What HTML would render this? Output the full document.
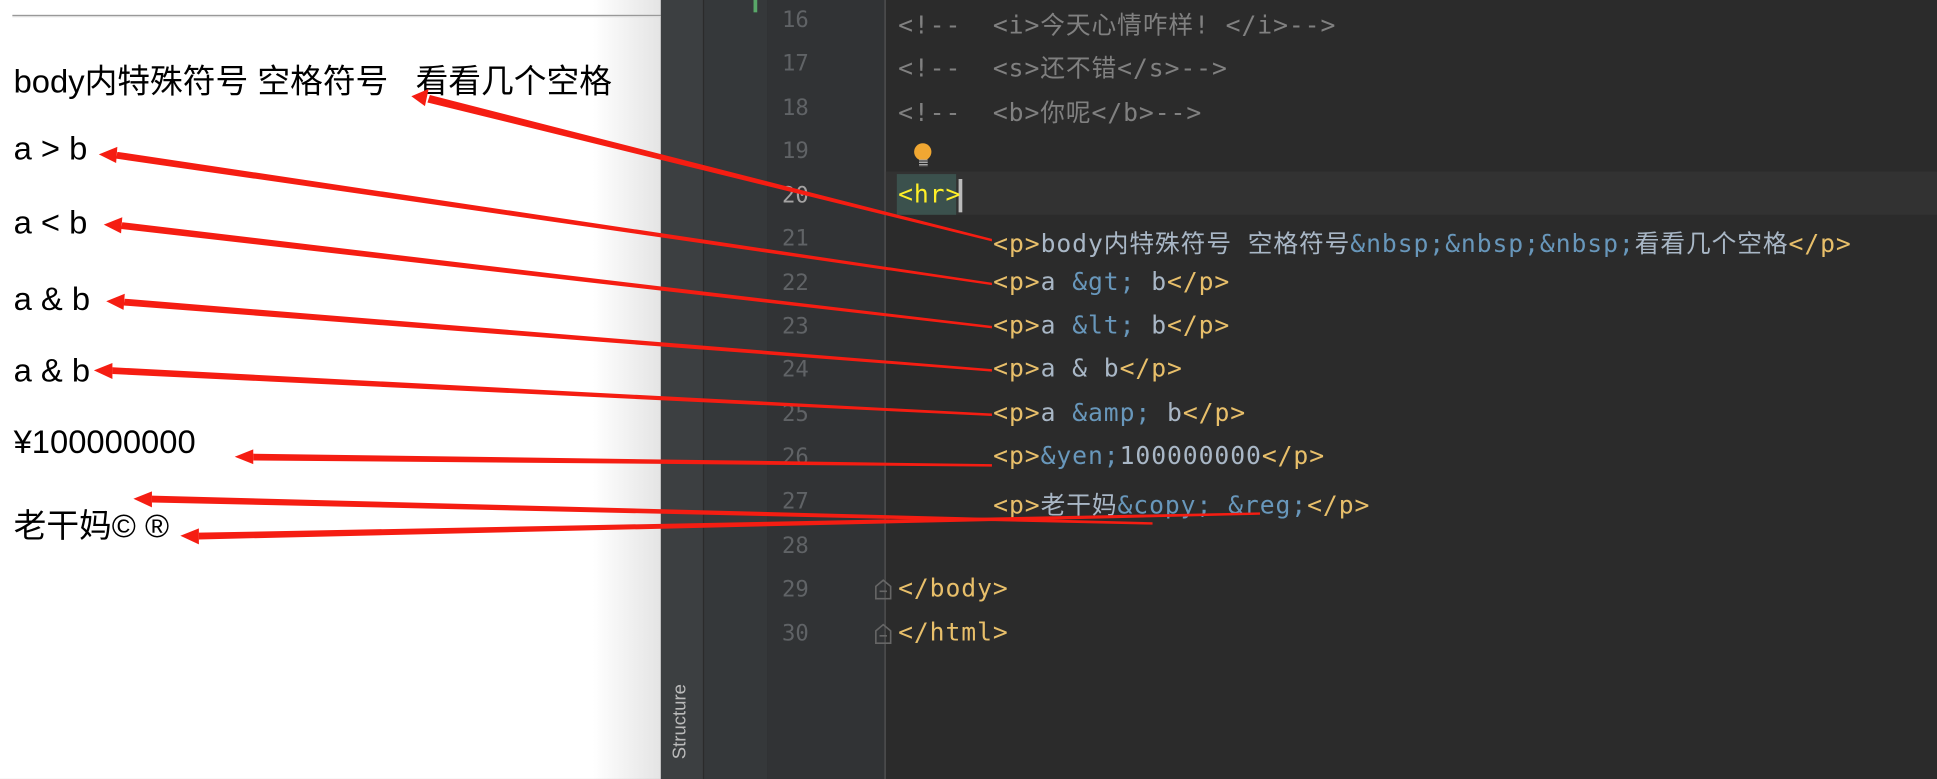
<!DOCTYPE html>
<html><head><meta charset="utf-8"><style>
html,body{margin:0;padding:0;width:1937px;height:779px;overflow:hidden;background:#2b2b2b}
#w{position:absolute;left:0;top:0;width:1568px;height:631px;transform:scale(1.2353,1.2345);transform-origin:0 0}
.left{position:absolute;left:0;top:0;width:535px;height:631px;background:linear-gradient(90deg,#fff 0,#fff 480px,#e4e4e4 535px)}
.left hr{position:absolute;left:10px;top:12px;width:525px;margin:0;border:0;border-top:1px solid #999;border-bottom:1px solid #ddd}
.lt{position:absolute;left:11px;font:26.5px "Liberation Sans","Noto Sans CJK SC",sans-serif;color:#000;white-space:pre}
.s1{position:absolute;left:535px;top:0;width:34px;height:631px;background:#3c3f41;border-right:1px solid #2b2b2b}
.s2{position:absolute;left:570px;top:0;width:51px;height:631px;background:#35383a}
.gut{position:absolute;left:621px;top:0;width:95px;height:631px;background:#313335;border-right:1px solid #555}
.ln{position:absolute;left:633px;width:30px;font:18px "DejaVu Sans Mono",monospace;color:#606366}
.cd{position:absolute;font:20px "DejaVu Sans Mono","Noto Sans CJK SC",monospace;color:#a9b7c6;white-space:pre;letter-spacing:0.75px}
.t{color:#e8bf6a}.e{color:#6897bb}.c{color:#808080}
.struct{position:absolute;left:542px;top:615px;transform:rotate(-90deg);transform-origin:0 0;font:15px "Liberation Sans",sans-serif;color:#bbb}
</style></head><body><div id="w">
<div class="left"><hr>
<div class="lt" style="top:44px">body内特殊符号 空格符号   看看几个空格</div>
<div class="lt" style="top:105px">a &gt; b</div>
<div class="lt" style="top:165px">a &lt; b</div>
<div class="lt" style="top:227px">a &amp; b</div>
<div class="lt" style="top:285px">a &amp; b</div>
<div class="lt" style="top:343px">¥100000000</div>
<div class="lt" style="top:404px">老干妈© ®</div>
</div>
<div class="s1"></div><div class="s2"></div>
<div style="position:absolute;left:610px;top:0;width:3px;height:10px;background:#59a869"></div>
<div class="gut"></div>
<div style="position:absolute;left:717px;top:139px;width:851px;height:35px;background:#323232"></div>
<div class="ln" style="top:6px">16</div><div class="ln" style="top:41px">17</div><div class="ln" style="top:77px">18</div><div class="ln" style="top:112px">19</div><div class="ln" style="top:148px;color:#a4a3a3">20</div><div class="ln" style="top:183px">21</div><div class="ln" style="top:219px">22</div><div class="ln" style="top:254px">23</div><div class="ln" style="top:289px">24</div><div class="ln" style="top:325px">25</div><div class="ln" style="top:360px">26</div><div class="ln" style="top:396px">27</div><div class="ln" style="top:432px">28</div><div class="ln" style="top:467px">29</div><div class="ln" style="top:503px">30</div>
<div class="cd c" style="left:727px;top:4px">&lt;!--  &lt;i&gt;今天心情咋样! &lt;/i&gt;--&gt;</div>
<div class="cd c" style="left:727px;top:39px">&lt;!--  &lt;s&gt;还不错&lt;/s&gt;--&gt;</div>
<div class="cd c" style="left:727px;top:75px">&lt;!--  &lt;b&gt;你呢&lt;/b&gt;--&gt;</div>
<div style="position:absolute;left:740px;top:116px;width:14px;height:14px;border-radius:50%;background:#f0a732"></div>
<div style="position:absolute;left:744px;top:129px;width:7px;height:6px;background:repeating-linear-gradient(#aaa 0 1px,transparent 1px 2px)"></div>
<div style="position:absolute;left:726px;top:141px;width:48px;height:33px;background:#3b514d"></div>
<div style="position:absolute;left:776px;top:145px;width:3px;height:27px;background:#bbb"></div>
<div class="cd" style="left:727px;top:145px;color:#ffef28">&lt;hr&gt;</div>
<div class="cd" style="left:804px;top:181px"><span class="t">&lt;p&gt;</span>body内特殊符号 空格符号<span class="e">&amp;nbsp;&amp;nbsp;&amp;nbsp;</span>看看几个空格<span class="t">&lt;/p&gt;</span></div>
<div class="cd" style="left:804px;top:216px"><span class="t">&lt;p&gt;</span>a <span class="e">&amp;gt;</span> b<span class="t">&lt;/p&gt;</span></div>
<div class="cd" style="left:804px;top:251px"><span class="t">&lt;p&gt;</span>a <span class="e">&amp;lt;</span> b<span class="t">&lt;/p&gt;</span></div>
<div class="cd" style="left:804px;top:286px"><span class="t">&lt;p&gt;</span>a &amp; b<span class="t">&lt;/p&gt;</span></div>
<div class="cd" style="left:804px;top:322px"><span class="t">&lt;p&gt;</span>a <span class="e">&amp;amp;</span> b<span class="t">&lt;/p&gt;</span></div>
<div class="cd" style="left:804px;top:357px"><span class="t">&lt;p&gt;</span><span class="e">&amp;yen;</span>100000000<span class="t">&lt;/p&gt;</span></div>
<div class="cd" style="left:804px;top:393px"><span class="t">&lt;p&gt;</span>老干妈<span class="e">&amp;copy; &amp;reg;</span><span class="t">&lt;/p&gt;</span></div>
<div class="cd t" style="left:727px;top:464px">&lt;/body&gt;</div>
<div class="cd t" style="left:727px;top:500px">&lt;/html&gt;</div>
<svg style="position:absolute;left:706px;top:469px" width="20" height="60" viewBox="0 0 20 60"><g fill="none" stroke="#666" stroke-width="1.3"><path d="M3 16 V6 L9 1 L15 6 V16Z M6 10 H12"/><path d="M3 52 V42 L9 37 L15 42 V52Z M6 46 H12"/></g></svg>
<div class="struct">Structure</div>
<svg style="position:absolute;left:0;top:0" width="1568" height="631" viewBox="0 0 1568 631">
<g fill="#f51d12">
<path d="M803 193.5 L803 195.5 L346 83 L348 77Z"/><path d="M333 78 L347 72 L344 86Z"/>
<path d="M803 229 L803 231 L94 128.5 L95 123Z"/><path d="M80 125 L95 119 L94 132Z"/>
<path d="M803 264 L803 266 L98 185.5 L99 180Z"/><path d="M84 182 L99 176 L98 189Z"/>
<path d="M803 299 L803 301 L100 247.5 L101 242Z"/><path d="M86 244 L101 238 L100 251Z"/>
<path d="M803 335 L803 337 L91 303 L91 297.5Z"/><path d="M76 300 L91 294 L91 307Z"/>
<path d="M803 376 L803 378 L205 373 L205 367.5Z"/><path d="M190 370 L205 364 L205 376Z"/>
<path d="M933 423 L933 425 L123 407 L123 401.5Z"/><path d="M108 404 L123 398 L123 411Z"/>
<path d="M1020 415 L1020 417 L161 437 L161 431.5Z"/><path d="M146 434 L161 428 L161 441Z"/>
</g></svg>
</div></body></html>
